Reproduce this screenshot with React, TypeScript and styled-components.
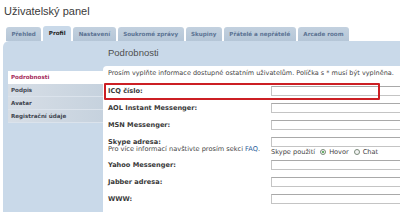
import React from "react"
import styled, { createGlobalStyle } from "styled-components"

const GlobalStyle = createGlobalStyle`
  html, body {
    margin: 0;
    padding: 0;
    background: #ffffff;
    overflow: hidden;
  }
  body {
    font-family: "DejaVu Sans", Verdana, sans-serif;
    color: #333333;
  }
`

const Page = styled.div`
  width: 400px;
  height: 212px;
  overflow: hidden;
`

const Title = styled.h2`
  margin: 0;
  padding: 4px 0 0 4px;
  height: 15px;
  font-family: "Liberation Sans", Arial, sans-serif;
  font-weight: normal;
  font-size: 11px;
  line-height: 14px;
  color: #3a3a3a;
`

const TabBar = styled.ul`
  display: flex;
  align-items: flex-end;
  gap: 2px;
  list-style: none;
  margin: 0;
  padding: 0 0 0 6px;
  height: 22px;
`

const Tab = styled.li<{ $active?: boolean }>`
  height: ${({ $active }) => ($active ? "15px" : "14px")};
  line-height: ${({ $active }) => ($active ? "15px" : "14px")};
  padding: 0 5.5px;
  border-radius: 3px 3px 0 0;
  font-size: 5.6px;
  font-weight: bold;
  white-space: nowrap;
  color: ${({ $active }) => ($active ? "#222222" : "#5b7393")};
  background: ${({ $active }) =>
    $active ? "#c9d9e9" : "linear-gradient(#c3d1df, #b5c6d7)"};
`

const Panel = styled.section`
  margin-left: 3px;
  background: #c9d9e9;
  border-radius: 6px 0 0 0;
  height: 171px;
  display: grid;
  grid-template-columns: 100px 1fr;
  grid-template-rows: 25px 1fr;
`

const PanelTitle = styled.h3`
  grid-column: 2;
  margin: 0;
  padding-left: 5px;
  font-family: "Liberation Sans", Arial, sans-serif;
  font-weight: normal;
  font-size: 9.5px;
  line-height: 23px;
  color: #4f4f4f;
`

const Menu = styled.ul`
  grid-column: 1;
  list-style: none;
  margin: 0;
  padding: 5px 0 0 5px;
`

const MenuItem = styled.li<{ $active?: boolean }>`
  height: 12px;
  line-height: 12px;
  padding-left: 3px;
  border-bottom: 1px solid ${({ $active }) => ($active ? "#ffffff" : "#dbe3ec")};
  font-size: 5.6px;
  font-weight: bold;
  color: ${({ $active }) => ($active ? "#a52a5a" : "#3f4650")};
  background: ${({ $active }) =>
    $active ? "#ffffff" : "linear-gradient(to right, #d7dee6, #c6d2de)"};
`

const Content = styled.div`
  grid-column: 2;
  background: #ffffff;
  border-radius: 4px 0 0 0;
  padding-left: 5px;
  overflow: hidden;
`

const Intro = styled.p`
  margin: 0;
  height: 17px;
  line-height: 14px;
  font-size: 6.5px;
  white-space: nowrap;
  color: #444444;
`

const Row = styled.div<{ $tall?: boolean }>`
  position: relative;
  display: grid;
  grid-template-columns: 163px 1fr;
  height: ${({ $tall }) => ($tall ? "23px" : "17px")};
`

const Label = styled.div`
  padding-top: 4px;
  font-size: 6.6px;
  line-height: 8px;
  white-space: nowrap;
`

const LabelName = styled.div`
  font-weight: bold;
  color: #3a3a3a;
`

const Hint = styled.div`
  font-size: 6.6px;
  line-height: 6px;
  color: #444444;
`

const Link = styled.a`
  color: #1f5c99;
  text-decoration: none;
`

const Field = styled.div`
  padding-top: 3px;
`

const TextInput = styled.input`
  display: block;
  box-sizing: border-box;
  width: 150px;
  height: 10px;
  margin: 0;
  padding: 0;
  border: 1px solid #c4c4c4;
  border-top-color: #a9a9a9;
  background: #ffffff;
`

const SkypeUse = styled.div`
  display: flex;
  align-items: center;
  gap: 3px;
  height: 10px;
  font-size: 6.6px;
  color: #444444;
  white-space: nowrap;
`

const Radio = styled.span<{ $checked?: boolean }>`
  display: inline-flex;
  align-items: center;
  justify-content: center;
  box-sizing: border-box;
  width: 6px;
  height: 6px;
  margin-left: 2px;
  border-radius: 50%;
  border: 1px solid #7a8a7a;
  background: #f4f4f4;
  &::after {
    content: "";
    width: 2px;
    height: 2px;
    border-radius: 50%;
    background: ${({ $checked }) => ($checked ? "#3a9a3a" : "transparent")};
  }
`

const Highlight = styled.div`
  position: absolute;
  left: -4px;
  top: 0;
  width: 276px;
  height: 17px;
  box-sizing: border-box;
  border: 2px solid #cc1f24;
  border-radius: 1px;
  pointer-events: none;
`

const tabs = [
  "Přehled",
  "Profil",
  "Nastavení",
  "Soukromé zprávy",
  "Skupiny",
  "Přátelé a nepřátelé",
  "Arcade room",
]

const menu = ["Podrobnosti", "Podpis", "Avatar", "Registrační údaje"]

const App = () => {
  return (
    <Page>
      <GlobalStyle />
      <Title>Uživatelský panel</Title>
      <TabBar>
        {tabs.map((t) => (
          <Tab key={t} $active={t === "Profil"}>
            {t}
          </Tab>
        ))}
      </TabBar>
      <Panel>
        <PanelTitle>Podrobnosti</PanelTitle>
        <Menu>
          {menu.map((m) => (
            <MenuItem key={m} $active={m === "Podrobnosti"}>
              {m}
            </MenuItem>
          ))}
        </Menu>
        <Content>
          <Intro>
            Prosím vyplňte informace dostupné ostatním uživatelům. Políčka s * musí být vyplněna.
          </Intro>
          <Row>
            <Highlight />
            <Label>
              <LabelName>ICQ číslo:</LabelName>
            </Label>
            <Field>
              <TextInput type="text" />
            </Field>
          </Row>
          <Row>
            <Label>
              <LabelName>AOL Instant Messenger:</LabelName>
            </Label>
            <Field>
              <TextInput type="text" />
            </Field>
          </Row>
          <Row>
            <Label>
              <LabelName>MSN Messenger:</LabelName>
            </Label>
            <Field>
              <TextInput type="text" />
            </Field>
          </Row>
          <Row $tall>
            <Label>
              <LabelName>Skype adresa:</LabelName>
              <Hint>
                Pro více informací navštivte prosím sekci <Link href="#">FAQ</Link>.
              </Hint>
            </Label>
            <Field>
              <TextInput type="text" />
              <SkypeUse>
                Skype použití <Radio $checked /> Hovor <Radio /> Chat
              </SkypeUse>
            </Field>
          </Row>
          <Row>
            <Label>
              <LabelName>Yahoo Messenger:</LabelName>
            </Label>
            <Field>
              <TextInput type="text" />
            </Field>
          </Row>
          <Row>
            <Label>
              <LabelName>Jabber adresa:</LabelName>
            </Label>
            <Field>
              <TextInput type="text" />
            </Field>
          </Row>
          <Row>
            <Label>
              <LabelName>WWW:</LabelName>
            </Label>
            <Field>
              <TextInput type="text" />
            </Field>
          </Row>
        </Content>
      </Panel>
    </Page>
  )
}

export default App
